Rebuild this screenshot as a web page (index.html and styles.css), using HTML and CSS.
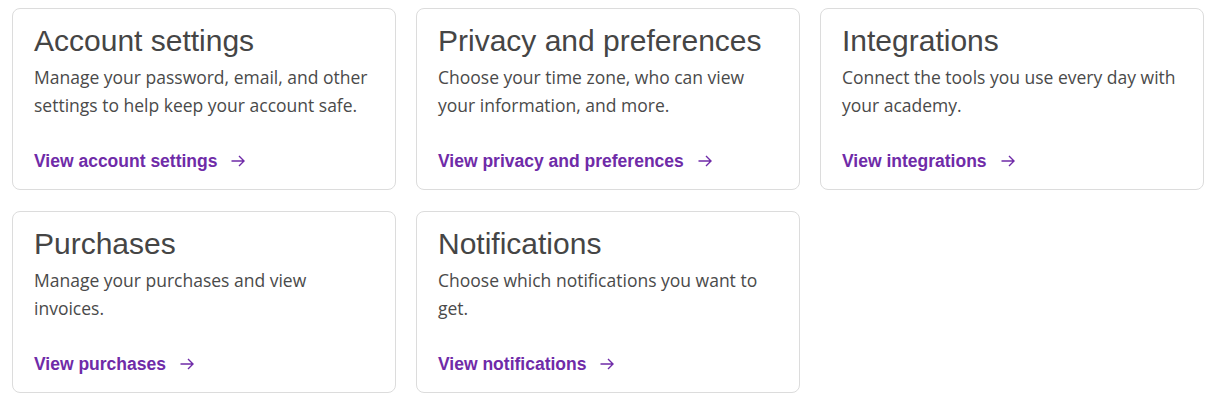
FILE: index.html
```html
<!DOCTYPE html>
<html lang="en">
<head>
    <meta charset="UTF-8">
    <meta name="viewport" content="width=device-width, initial-scale=1.0">
    <title>Settings</title>
    <link rel="stylesheet" href="styles.css">
</head>
<body>
    <div class="cards">
        <div class="card">
            <h2>Account settings</h2>
            <p>Manage your password, email, and other settings to help keep your account safe.</p>
            <a href="#" class="more">View account settings
                <svg width="14" height="12" viewBox="0 0 14 12"><path d="M0.5 6h12.5M8 1l5 5-5 5" fill="none" stroke="currentColor" stroke-width="1.4"/></svg>
            </a>
        </div>
        <div class="card">
            <h2>Privacy and preferences</h2>
            <p>Choose your time zone, who can view your information, and more.</p>
            <a href="#" class="more">View privacy and preferences
                <svg width="14" height="12" viewBox="0 0 14 12"><path d="M0.5 6h12.5M8 1l5 5-5 5" fill="none" stroke="currentColor" stroke-width="1.4"/></svg>
            </a>
        </div>
        <div class="card">
            <h2>Integrations</h2>
            <p>Connect the tools you use every day with your academy.</p>
            <a href="#" class="more">View integrations
                <svg width="14" height="12" viewBox="0 0 14 12"><path d="M0.5 6h12.5M8 1l5 5-5 5" fill="none" stroke="currentColor" stroke-width="1.4"/></svg>
            </a>
        </div>
        <div class="card">
            <h2>Purchases</h2>
            <p>Manage your purchases and view invoices.</p>
            <a href="#" class="more">View purchases
                <svg width="14" height="12" viewBox="0 0 14 12"><path d="M0.5 6h12.5M8 1l5 5-5 5" fill="none" stroke="currentColor" stroke-width="1.4"/></svg>
            </a>
        </div>
        <div class="card">
            <h2>Notifications</h2>
            <p>Choose which notifications you want to get.</p>
            <a href="#" class="more">View notifications
                <svg width="14" height="12" viewBox="0 0 14 12"><path d="M0.5 6h12.5M8 1l5 5-5 5" fill="none" stroke="currentColor" stroke-width="1.4"/></svg>
            </a>
        </div>
    </div>
</body>
</html>
```

FILE: styles.css
```css
body { margin: 0; padding: 8px 8px 8px 12px; background: #fff; }
.cards { display: grid; grid-template-columns: repeat(3, 1fr); column-gap: 20px; row-gap: 21px; }
.card { display: flex; flex-direction: column; align-items: flex-start; border: 1px solid #dcdcdc; border-radius: 8px; padding: 14px 21px 16px; }
.card h2 { margin: 0 0 4px; font-family: "Liberation Sans", Arial, sans-serif; font-weight: normal; font-size: 30px; line-height: 36px; color: #454545; }
.card p { margin: 0 0 30px; font-family: "Open Sans", sans-serif; font-size: 17.5px; line-height: 28px; color: #4a4a4a; }
.more { display: flex; align-items: center; gap: 14px; margin-top: auto; font-family: "Liberation Sans", Arial, sans-serif; font-weight: bold; font-size: 17.5px; line-height: 24px; color: #6f2ba8; text-decoration: none; }
.more svg { display: block; }
```
